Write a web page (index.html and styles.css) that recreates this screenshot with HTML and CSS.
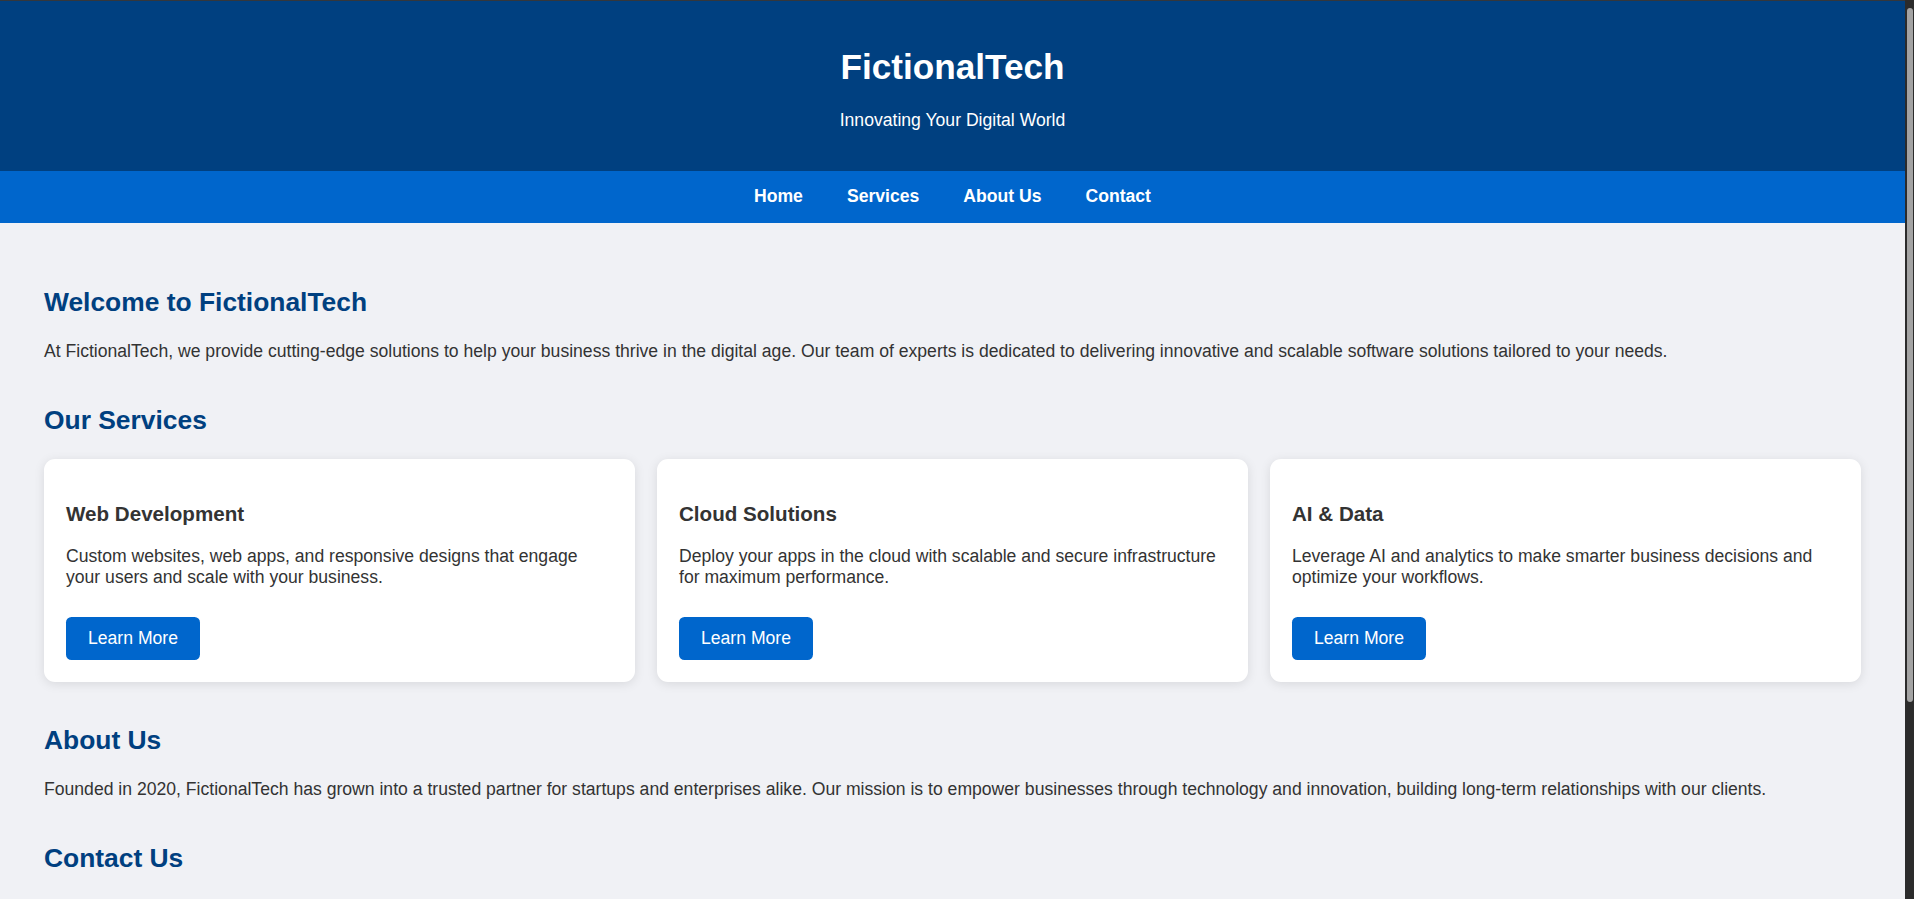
FILE: index.html
```html
<!DOCTYPE html>
<html lang="en">
<head>
<meta charset="utf-8">
<title>FictionalTech</title>
<link rel="stylesheet" href="styles.css">
</head>
<body>
<div class="page">
  <header class="site-header">
    <h1>FictionalTech</h1>
    <p>Innovating Your Digital World</p>
  </header>
  <nav class="site-nav">
    <a href="#home">Home</a>
    <a href="#services">Services</a>
    <a href="#about">About Us</a>
    <a href="#contact">Contact</a>
  </nav>
  <main class="content">
    <section class="section" id="home">
      <h2>Welcome to FictionalTech</h2>
      <p>At FictionalTech, we provide cutting-edge solutions to help your business thrive in the digital age. Our team of experts is dedicated to delivering innovative and scalable software solutions tailored to your needs.</p>
    </section>
    <section class="section" id="services">
      <h2>Our Services</h2>
      <div class="cards">
        <div class="card">
          <h3>Web Development</h3>
          <p>Custom websites, web apps, and responsive designs that engage your users and scale with your business.</p>
          <a class="btn" href="#">Learn More</a>
        </div>
        <div class="card">
          <h3>Cloud Solutions</h3>
          <p>Deploy your apps in the cloud with scalable and secure infrastructure for maximum performance.</p>
          <a class="btn" href="#">Learn More</a>
        </div>
        <div class="card">
          <h3>AI &amp; Data</h3>
          <p>Leverage AI and analytics to make smarter business decisions and optimize your workflows.</p>
          <a class="btn" href="#">Learn More</a>
        </div>
      </div>
    </section>
    <section class="section" id="about">
      <h2>About Us</h2>
      <p>Founded in 2020, FictionalTech has grown into a trusted partner for startups and enterprises alike. Our mission is to empower businesses through technology and innovation, building long-term relationships with our clients.</p>
    </section>
    <section class="section" id="contact">
      <h2>Contact Us</h2>
    </section>
  </main>
</div>
<div class="scrollbar"><div class="scrollbar-thumb"></div></div>
</body>
</html>
```
FILE: styles.css
```css
html, body {
  margin: 0;
  padding: 0;
  overflow: hidden;
}

body {
  font-family: "Liberation Sans", Arial, sans-serif;
  font-size: 17.6px;
  color: #333;
  background: #f0f1f5;
}

.page {
  width: calc(100% - 9px);
}

.site-header {
  background: #004080;
  color: #fff;
  text-align: center;
  padding: 22px;
  border-top: 1px solid #34373c;
}

.site-header h1 {
  font-size: 35.2px;
  margin: 23.6px 0;
}

.site-header p {
  margin: 17.6px 0;
}

.site-nav {
  background: #0066cc;
  display: flex;
  justify-content: center;
  padding: 15.2px 0 15.8px;
}

.site-nav a {
  color: #fff;
  font-weight: bold;
  text-decoration: none;
  margin: 0 22px;
}

.content {
  padding: 42.5px 44px 44px;
}

.section {
  margin-bottom: 43px;
}

.section h2 {
  color: #004080;
  font-size: 26.4px;
  margin: 21.9px 0 22.9px;
}

.section p {
  margin: 17.6px 0;
}

.cards {
  display: grid;
  grid-template-columns: repeat(3, 1fr);
  gap: 22px;
}

.card {
  background: #fff;
  border-radius: 11px;
  padding: 22px;
  box-shadow: 0 2px 11px rgba(0, 0, 0, 0.1);
}

.card h3 {
  font-size: 20.6px;
  margin: 20.6px 0;
  color: #333;
}

.card p {
  margin: 17.6px 0;
}

.btn {
  display: inline-block;
  margin-top: 11px;
  background: #0066cc;
  color: #fff;
  text-decoration: none;
  padding: 11px 22px;
  border-radius: 5.5px;
}

.scrollbar {
  position: fixed;
  top: 0;
  right: 0;
  width: 9px;
  height: 100%;
  background: #2b2b2b;
}

.scrollbar-thumb {
  margin: 8px 1px 0 2px;
  height: 694px;
  background: #a3a3a3;
  border-radius: 3px;
}
```
